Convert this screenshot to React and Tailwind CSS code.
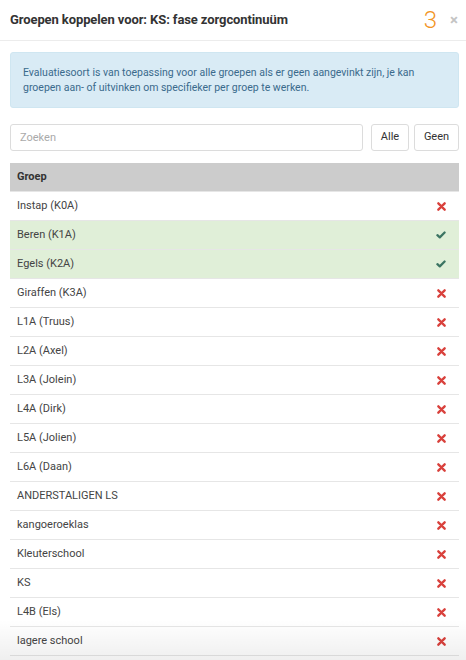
import React from 'react';

const GROUPS = [
  { name: 'Instap (K0A)', linked: false },
  { name: 'Beren (K1A)', linked: true },
  { name: 'Egels (K2A)', linked: true },
  { name: 'Giraffen (K3A)', linked: false },
  { name: 'L1A (Truus)', linked: false },
  { name: 'L2A (Axel)', linked: false },
  { name: 'L3A (Jolein)', linked: false },
  { name: 'L4A (Dirk)', linked: false },
  { name: 'L5A (Jolien)', linked: false },
  { name: 'L6A (Daan)', linked: false },
  { name: 'ANDERSTALIGEN LS', linked: false },
  { name: 'kangoeroeklas', linked: false },
  { name: 'Kleuterschool', linked: false },
  { name: 'KS', linked: false },
  { name: 'L4B (Els)', linked: false },
  { name: 'lagere school', linked: false },
];

function Cross() {
  return (
    <svg width="9" height="9" viewBox="0 0 10 10" className="text-[#d9413c]">
      <path d="M1.5 1.5 L8.5 8.5 M8.5 1.5 L1.5 8.5" stroke="currentColor" strokeWidth="2.6" strokeLinecap="round" />
    </svg>
  );
}

function Check() {
  return (
    <svg width="10" height="8" viewBox="0 0 12 10" className="text-[#3b7462]">
      <path d="M1.5 5.2 L4.5 8 L10.5 1.8" fill="none" stroke="currentColor" strokeWidth="2.8" strokeLinecap="round" strokeLinejoin="round" />
    </svg>
  );
}

function GroupRow({ group }) {
  return (
    <div className={`h-[29px] flex items-center justify-between border-t border-[#e6e6e6] pl-[7px] pr-[13px] text-[11px] text-[#444] ${group.linked ? 'bg-[#e0efd8]' : 'bg-white'}`}>
      <span>{group.name}</span>
      {group.linked ? <Check /> : <Cross />}
    </div>
  );
}

export default function App() {
  return (
    <div className="w-[466px] h-[660px] bg-white relative overflow-hidden font-['Roboto',sans-serif]">
      {/* Header */}
      <div className="h-[41px] border-b border-[#ececec] flex items-center justify-between pl-[10px] pr-[8px]">
        <h1 className="text-[13px] font-bold text-[#333] tracking-[-0.1px]">Groepen koppelen voor: KS: fase zorgcontinuüm</h1>
        <div className="flex items-center gap-[13px]">
          <span className="text-[24px] font-light leading-none text-[#f29423]">3</span>
          <span className="text-[15px] font-bold leading-none text-[#c4c4c4]">×</span>
        </div>
      </div>

      <div className="pl-[10px] pr-[7px] pt-[11px]">
        {/* Info */}
        <div className="h-[56px] rounded-[3px] border border-[#cfe6f1] bg-[#d9ebf5] px-[12px] flex items-center">
          <p className="text-[10.5px] leading-[15px] text-[#3a6a8c]">
            Evaluatiesoort is van toepassing voor alle groepen als er geen aangevinkt zijn, je kan groepen aan- of uitvinken om specifieker per groep te werken.
          </p>
        </div>

        {/* Search + bulk buttons */}
        <div className="mt-[16px] flex">
          <input
            placeholder="Zoeken"
            className="h-[27px] w-[353px] shrink-0 rounded-[3px] border border-[#dcdcdc] px-[9px] text-[11px] text-[#444] placeholder-[#aaa] outline-none"
          />
          <button className="ml-[8px] h-[27px] w-[38px] shrink-0 rounded-[3px] border border-[#dcdcdc] text-[11px] text-[#333] bg-white">Alle</button>
          <button className="ml-[5px] h-[27px] w-[45px] shrink-0 rounded-[3px] border border-[#dcdcdc] text-[11px] text-[#333] bg-white">Geen</button>
        </div>

        {/* Groups table */}
        <div className="mt-[12px]">
          <div className="h-[28px] bg-[#cccccc] flex items-center pl-[7px] text-[11px] font-bold text-[#333]">Groep</div>
          {GROUPS.map(g => <GroupRow key={g.name} group={g} />)}
          <div className="border-t border-[#e6e6e6]" />
        </div>
      </div>

      {/* bottom scroll fade */}
      <div className="absolute left-0 right-0 bottom-0 h-[40px] bg-gradient-to-b from-transparent to-[#00000010] pointer-events-none" />
    </div>
  );
}
